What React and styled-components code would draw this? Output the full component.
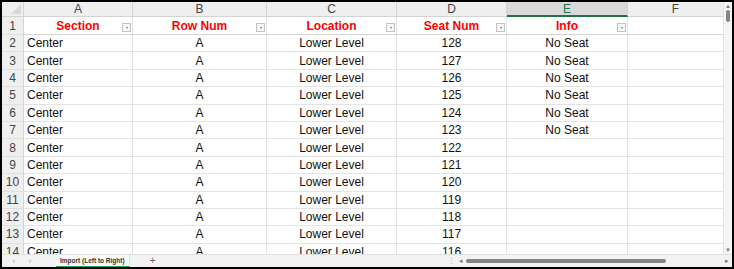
import React from 'react';
import styled, { createGlobalStyle } from 'styled-components';

const GlobalStyle = createGlobalStyle`
  html, body { margin: 0; padding: 0; background: #ffffff; }
  body { font-family: "Liberation Sans", Arial, sans-serif; }
`;

const columns = ['A', 'B', 'C', 'D', 'E', 'F'];
const headers = ['Section', 'Row Num', 'Location', 'Seat Num', 'Info', ''];
const seats = [128, 127, 126, 125, 124, 123, 122, 121, 120, 119, 118, 117, 116];

export default function App() {
  const rows = seats.map((seat, i) => ({
    num: i + 2,
    cells: ['Center', 'A', 'Lower Level', String(seat), i < 6 ? 'No Seat' : '', ''],
  }));

  return (
    <>
      <GlobalStyle />
      <Frame>
        <Main>
          <Sheet>
            <Corner>
              <svg width="10" height="10" viewBox="0 0 10 10">
                <polygon points="10,0 10,10 0,10" fill="#d8d8d8" />
              </svg>
            </Corner>
            {columns.map((c) => (
              <ColHead key={c} $active={c === 'E'}>{c}</ColHead>
            ))}

            <RowHead>1</RowHead>
            {headers.map((h, i) => (
              <TitleCell key={i}>
                {h}
                {h && <FilterBtn><span /></FilterBtn>}
              </TitleCell>
            ))}

            {rows.map((r) => (
              <React.Fragment key={r.num}>
                <RowHead>{r.num}</RowHead>
                {r.cells.map((v, j) => (
                  <Cell key={j} $left={j === 0}>{v}</Cell>
                ))}
              </React.Fragment>
            ))}
          </Sheet>
          <VScroll>
            <Arrow>▲</Arrow>
            <VThumb />
            <VSpace />
            <Arrow>▼</Arrow>
          </VScroll>
        </Main>
        <TabBar>
          <Nav>‹</Nav>
          <Nav>›</Nav>
          <Tab>Import (Left to Right)</Tab>
          <Plus>+</Plus>
          <Spacer />
          <Grip>⋮</Grip>
          <HArrow>◂</HArrow>
          <HTrack>
            <HThumb />
          </HTrack>
          <HArrow>▸</HArrow>
        </TabBar>
      </Frame>
    </>
  );
}

const Frame = styled.div`
  width: 734px;
  height: 269px;
  box-sizing: border-box;
  border: 2px solid #000;
  display: flex;
  flex-direction: column;
  overflow: hidden;
  background: #fff;
`;

const Main = styled.div`
  flex: 1;
  display: flex;
  min-height: 0;
`;

const Sheet = styled.div`
  flex: 1;
  display: grid;
  grid-template-columns: 22px 109px 134px 130px 110px 121px 96px;
  grid-template-rows: 15px 18px;
  grid-auto-rows: 17.4px;
  overflow: hidden;
  font-size: 12px;
  color: #111;
`;

const Corner = styled.div`
  background: #efefef;
  border-right: 1px solid #d4d4d4;
  border-bottom: 1px solid #d4d4d4;
  display: flex;
  align-items: flex-end;
  justify-content: flex-end;
  padding: 0 2px 2px 0;
`;

const ColHead = styled.div`
  background: ${(p) => (p.$active ? '#d9d9d9' : '#efefef')};
  color: ${(p) => (p.$active ? '#217346' : '#444')};
  border-right: 1px solid #d4d4d4;
  border-bottom: ${(p) => (p.$active ? '2px solid #217346' : '1px solid #d4d4d4')};
  display: flex;
  align-items: center;
  justify-content: center;
  font-size: 12px;
  line-height: 1;
`;

const RowHead = styled.div`
  background: #efefef;
  color: #444;
  border-right: 1px solid #d4d4d4;
  border-bottom: 1px solid #e0e0e0;
  display: flex;
  align-items: center;
  justify-content: center;
  font-size: 12px;
`;

const Cell = styled.div`
  border-right: 1px solid #e4e4e4;
  border-bottom: 1px solid #e4e4e4;
  display: flex;
  align-items: center;
  justify-content: ${(p) => (p.$left ? 'flex-start' : 'center')};
  padding-left: ${(p) => (p.$left ? '3px' : '0')};
  white-space: nowrap;
  overflow: hidden;
`;

const TitleCell = styled(Cell)`
  position: relative;
  justify-content: center;
  color: #ff0000;
  font-weight: bold;
  padding-left: 0;
  border-bottom: 1px solid #d4d4d4;
`;

const FilterBtn = styled.div`
  position: absolute;
  right: 1px;
  bottom: 2px;
  width: 7px;
  height: 7px;
  border: 1px solid #c4c4c4;
  background: #f7f7f7;
  display: flex;
  align-items: center;
  justify-content: center;

  span {
    width: 0;
    height: 0;
    border-left: 1.5px solid transparent;
    border-right: 1.5px solid transparent;
    border-top: 2px solid #777;
  }
`;

const VScroll = styled.div`
  width: 8px;
  background: #f5f5f5;
  display: flex;
  flex-direction: column;
  align-items: center;
  border-left: 1px solid #e4e4e4;
`;

const Arrow = styled.div`
  font-size: 6px;
  color: #777;
  line-height: 8px;
  height: 8px;
`;

const VThumb = styled.div`
  width: 4px;
  height: 12px;
  border-radius: 2px;
  background: #858585;
`;

const VSpace = styled.div`
  flex: 1;
`;

const TabBar = styled.div`
  height: 12px;
  background: #f3f3f3;
  border-top: 1px solid #e0e0e0;
  display: flex;
  align-items: center;
  font-size: 8px;
  color: #999;
`;

const Nav = styled.div`
  width: 16px;
  height: 12px;
  text-align: center;
  font-size: 9px;
  line-height: 12px;
  color: #aaa;
  &:first-child { margin-left: 4px; }
`;

const Tab = styled.div`
  margin-left: 18px;
  height: 12px;
  box-sizing: border-box;
  padding: 0 4px;
  background: #fafafa;
  border-bottom: 1px solid #21a366;
  border-right: 1px solid #ddd;
  font-size: 6.5px;
  font-weight: bold;
  color: #333;
  line-height: 11px;
  white-space: nowrap;
`;

const Plus = styled.div`
  margin-left: 20px;
  font-size: 10px;
  color: #666;
  line-height: 12px;
`;

const Spacer = styled.div`
  flex: 1;
`;

const Grip = styled.div`
  font-size: 7px;
  line-height: 12px;
  color: #aaa;
  width: 10px;
  text-align: center;
`;

const HArrow = styled.div`
  font-size: 7px;
  line-height: 12px;
  color: #777;
  width: 10px;
  text-align: center;
`;

const HTrack = styled.div`
  width: 256px;
  height: 5px;
  display: flex;
  align-items: center;
`;

const HThumb = styled.div`
  width: 200px;
  height: 4px;
  border-radius: 2px;
  background: #858585;
`;
